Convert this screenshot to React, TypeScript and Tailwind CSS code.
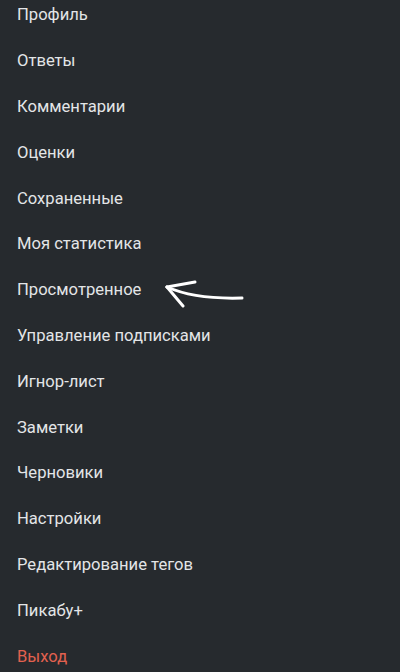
const items = [
  "Профиль",
  "Ответы",
  "Комментарии",
  "Оценки",
  "Сохраненные",
  "Моя статистика",
  "Просмотренное",
  "Управление подписками",
  "Игнор-лист",
  "Заметки",
  "Черновики",
  "Настройки",
  "Редактирование тегов",
  "Пикабу+",
];

function Arrow() {
  return (
    <svg width="84" height="36" viewBox="0 0 84 36" fill="none" className="ml-[24px] -mt-[2px]">
      <path d="M2 15 C 20 23, 45 27, 77 26" stroke="#ffffff" strokeWidth="3" strokeLinecap="round" />
      <path d="M2 15 L 30 10" stroke="#ffffff" strokeWidth="3" strokeLinecap="round" />
      <path d="M2 15 L 18 34" stroke="#ffffff" strokeWidth="3" strokeLinecap="round" />
    </svg>
  );
}

export default function App() {
  return (
    <div className="h-[672px] w-[400px] overflow-hidden bg-[#262a2e] font-['Roboto',sans-serif]">
      <ul className="-mt-[7px]">
        {items.map((label) => (
          <li key={label} className="flex h-[45.8px] items-center pl-[17px] text-[16.6px] text-[#e3e5e7]">
            <span>{label}</span>
            {label === "Просмотренное" && <Arrow />}
          </li>
        ))}
        <li className="flex h-[45.8px] items-center pl-[17px] text-[16.6px] text-[#e2614f]">Выход</li>
      </ul>
    </div>
  );
}
